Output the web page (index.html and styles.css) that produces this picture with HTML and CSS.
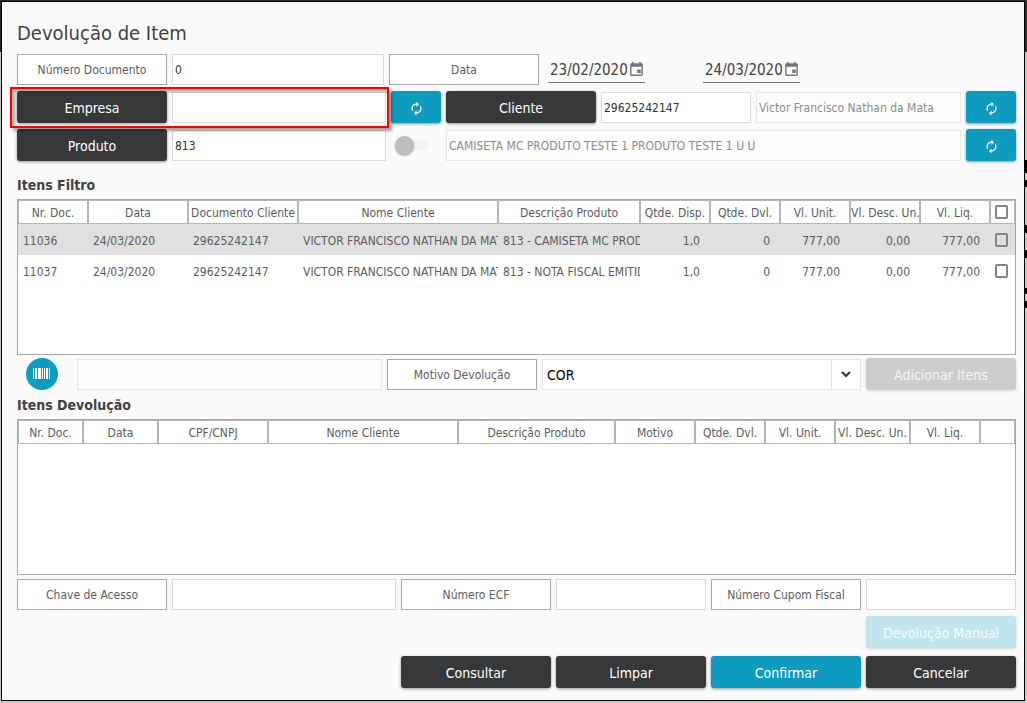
FILE: index.html
```html
<!DOCTYPE html>
<html lang="pt-BR">
<head>
<meta charset="utf-8">
<title>Devolução de Item</title>
<link rel="stylesheet" href="styles.css">
</head>
<body>
<svg class="symbols" aria-hidden="true">
  <symbol id="sync" viewBox="0 0 24 24"><path d="M12 6v3l4-4-4-4v3c-4.420 0-8 3.580-8 8 0 1.570.46 3.030 1.240 4.260L6.700 14.800C6.250 13.970 6 13.010 6 12c0-3.310 2.690-6 6-6zm6.760 1.740L17.300 9.200c.44.840.7 1.790.7 2.800 0 3.310-2.690 6-6 6v-3l-4 4 4 4v-3c4.420 0 8-3.580 8-8 0-1.570-.46-3.030-1.240-4.260z"/></symbol>
  <symbol id="calendar" viewBox="0 0 24 24"><path d="M18 12h-5v5h5v-5zM16 1v2H8V1H6v2H5c-1.110 0-2 .9-2 2v14c0 1.100.89 2 2 2h14c1.100 0 2-.9 2-2V5c0-1.100-.9-2-2-2h-1V1h-2zm3 18H5V8h14v11z"/></symbol>
</svg>
<main class="dialog">
  <h1 class="title">Devolução de Item</h1>
  <form class="form">
    <div class="filters">
      <div class="row row-document">
        <label class="caption" for="numero">Número Documento</label>
        <input class="field" id="numero" type="text" value="0">
        <label class="caption" for="data-inicio">Data</label>
        <span class="date">
          <input class="date-input" id="data-inicio" type="text" value="23/02/2020">
          <svg class="date-icon" aria-hidden="true"><use href="#calendar"/></svg>
        </span>
        <span class="date">
          <input class="date-input" type="text" value="24/03/2020" aria-label="Data final">
          <svg class="date-icon" aria-hidden="true"><use href="#calendar"/></svg>
        </span>
      </div>
      <div class="row row-lookup">
        <div class="company">
          <button class="btn" type="button">Empresa</button>
          <input class="field" type="text" aria-label="Empresa">
        </div>
        <button class="btn btn-primary" type="button" aria-label="Limpar empresa"><svg class="sync"><use href="#sync"/></svg></button>
        <button class="btn" type="button">Cliente</button>
        <input class="field" type="text" value="29625242147" aria-label="Documento do cliente">
        <input class="field" type="text" value="Victor Francisco Nathan da Mata" aria-label="Nome do cliente" disabled>
        <button class="btn btn-primary" type="button" aria-label="Limpar cliente"><svg class="sync"><use href="#sync"/></svg></button>
      </div>
      <div class="row row-lookup">
        <button class="btn" type="button">Produto</button>
        <input class="field" type="text" value="813" aria-label="Produto">
        <input class="switch" type="checkbox" role="switch" aria-label="Filtrar por grade">
        <input class="field field-wide" type="text" value="CAMISETA MC PRODUTO TESTE 1 PRODUTO TESTE 1 U U" aria-label="Descrição do produto" disabled>
        <button class="btn btn-primary" type="button" aria-label="Limpar produto"><svg class="sync"><use href="#sync"/></svg></button>
      </div>
    </div>

    <h2 class="section section-first">Itens Filtro</h2>
    <div class="grid">
      <table class="table">
        <colgroup>
          <col class="w70"><col class="w100"><col class="w110"><col class="w200"><col><col class="w70"><col class="w70"><col class="w70"><col class="w70"><col class="w70"><col class="w25">
        </colgroup>
        <thead>
          <tr><th>Nr. Doc.</th><th>Data</th><th>Documento Cliente</th><th>Nome Cliente</th><th>Descrição Produto</th><th>Qtde. Disp.</th><th>Qtde. Dvl.</th><th>Vl. Unit.</th><th>Vl. Desc. Un.</th><th>Vl. Liq.</th><th class="pick"><input class="check" type="checkbox" aria-label="Selecionar todos"></th></tr>
        </thead>
        <tbody>
          <tr class="selected"><td>11036</td><td>24/03/2020</td><td>29625242147</td><td>VICTOR FRANCISCO NATHAN DA MATA</td><td>813 - CAMISETA MC PRODUTO</td><td class="num">1,0</td><td class="num">0</td><td class="num">777,00</td><td class="num">0,00</td><td class="num">777,00</td><td class="pick"><input class="check" type="checkbox" aria-label="Selecionar 11036"></td></tr>
          <tr><td>11037</td><td>24/03/2020</td><td>29625242147</td><td>VICTOR FRANCISCO NATHAN DA MATA</td><td>813 - NOTA FISCAL EMITIDA</td><td class="num">1,0</td><td class="num">0</td><td class="num">777,00</td><td class="num">0,00</td><td class="num">777,00</td><td class="pick"><input class="check" type="checkbox" aria-label="Selecionar 11037"></td></tr>
        </tbody>
      </table>
    </div>

    <div class="row row-reason">
      <button class="barcode" type="button" aria-label="Ler código de barras">
        <svg class="barcode-icon" viewBox="0 0 18 12" aria-hidden="true"><path d="M0 0h1v11H0zM2 0h2v11H2zM5 0h3v11H5zM9 0h1v11H9zM11 0h1v11h-1zM13 0h2v11h-2zM16 0h1v11h-1z"/></svg>
      </button>
      <input class="field" type="text" aria-label="Código de barras" disabled>
      <label class="caption" for="motivo">Motivo Devolução</label>
      <span class="combo">
        <select class="select" id="motivo"><option>COR</option></select>
        <span class="combo-arrow"><svg class="chevron" viewBox="0 0 10 7" aria-hidden="true"><path d="M1 1l4 4 4-4"/></svg></span>
      </span>
      <button class="btn btn-muted" type="button" disabled>Adicionar Itens</button>
    </div>

    <h2 class="section">Itens Devolução</h2>
    <div class="grid">
      <table class="table">
        <colgroup>
          <col class="w65"><col class="w75"><col class="w110"><col class="w190"><col><col class="w80"><col class="w70"><col class="w70"><col class="w75"><col class="w70"><col class="w35">
        </colgroup>
        <thead>
          <tr><th>Nr. Doc.</th><th>Data</th><th>CPF/CNPJ</th><th>Nome Cliente</th><th>Descrição Produto</th><th>Motivo</th><th>Qtde. Dvl.</th><th>Vl. Unit.</th><th>Vl. Desc. Un.</th><th>Vl. Liq.</th><th></th></tr>
        </thead>
      </table>
    </div>

    <div class="row row-keys">
      <label class="caption" for="chave">Chave de Acesso</label>
      <input class="field" id="chave" type="text">
      <label class="caption" for="ecf">Número ECF</label>
      <input class="field" id="ecf" type="text">
      <label class="caption" for="cupom">Número Cupom Fiscal</label>
      <input class="field" id="cupom" type="text">
    </div>

    <div class="actions">
      <button class="btn btn-pale" type="button" disabled>Devolução Manual</button>
    </div>
    <div class="actions actions-main">
      <button class="btn" type="button">Consultar</button>
      <button class="btn" type="button">Limpar</button>
      <button class="btn btn-primary" type="button">Confirmar</button>
      <button class="btn" type="button">Cancelar</button>
    </div>
  </form>
</main>
</body>
</html>
```
FILE: styles.css
```css
* { box-sizing: border-box; }

body {
  margin: 0;
  padding: 1px 2px 2px 1px;
  background:
    linear-gradient(transparent 160px, #000 160px 173px, transparent 173px 180px, #000 180px 187px, transparent 187px 225px, #000 225px 233px, transparent 233px 250px, #000 250px 258px, transparent 258px 288px, #000 288px 294px, transparent 294px 301px, #000 301px 308px, transparent 308px) right / 2px 100% no-repeat,
    linear-gradient(#2b2b2b 52px, #c8c8c8 52px);
  font-family: Tahoma, "DejaVu Sans Condensed", "Noto Sans", sans-serif;
  font-size: 12px;
  color: #5c5c5c;
}

button, input, select { font: inherit; margin: 0; }

.symbols { display: none; }

.dialog {
  min-height: 700px;
  padding: 16px 8px 12px 15px;
  border: 1px solid #000;
  background: #fafafa;
}

.title {
  margin: 0 0 5px;
  font-size: 20px;
  line-height: 30px;
  font-weight: 400;
  color: #424242;
}

.filters { display: grid; gap: 6px; }

.row { display: grid; gap: 5px; align-items: end; }
.row-document { grid-template-columns: 150px 212fr 150px 150px 317fr; min-height: 32px; }
.row-lookup { grid-template-columns: 150px 214fr 50px 150px 150px 205fr 50px; }
.row-reason { grid-template-columns: 55px 305fr 150px 319fr 150px; margin-top: 3px; }
.row-keys { grid-template-columns: 150px 224fr 150px 150px 150px 150px; margin-top: 4px; }

.caption {
  height: 31px;
  border: 1px solid #a6a6a6;
  background: #fff;
  line-height: 31px;
  text-align: center;
  white-space: nowrap;
}

.field {
  width: 100%;
  min-width: 0;
  height: 31px;
  padding: 0 2px;
  border: 1px solid #d9d9d9;
  border-radius: 0;
  background: #fff;
  color: #333;
}
.field:disabled { border-color: #e6e6e6; background: #fdfdfd; color: #8c8c8c; }
.field-wide { grid-column: span 3; }

.date {
  display: flex;
  align-items: center;
  width: 97px;
  height: 26px;
  margin: 0 0 2px 4px;
  border-bottom: 1px solid #757575;
}
.date-input {
  flex: 1;
  min-width: 0;
  padding: 0 0 0 2px;
  border: 0;
  background: none;
  font-size: 15px;
  color: #424242;
}
.date-icon { flex: none; width: 17px; height: 17px; fill: #757575; }

.btn {
  height: 32px;
  padding: 2px 0 0;
  border: 0;
  border-radius: 3px;
  background: #37383a;
  box-shadow: 0 1px 3px rgba(0, 0, 0, .4);
  color: #fff;
  font-size: 14px;
  line-height: 30px;
  white-space: nowrap;
}
.btn-primary { background: #0e9bc0; }
.btn-muted { background: #cdcdcd; color: #f5f5f5; box-shadow: 0 1px 3px rgba(0, 0, 0, .15); }
.btn-pale { background: #c2e4ed; color: #f8fcfd; box-shadow: 0 1px 3px rgba(0, 0, 0, .15); }

.sync { display: block; width: 15px; height: 15px; margin: 0 auto; fill: #fff; }

.company {
  position: relative;
  grid-column: span 2;
  display: grid;
  grid-template-columns: 150px 1fr;
  gap: 5px;
  align-items: end;
}
.company::after {
  content: "";
  position: absolute;
  inset: -4px -3px -5px -7px;
  border: 2px solid #f00;
  box-shadow: 3px 3px 3px rgba(0, 0, 0, .35), inset 3px 3px 3px rgba(0, 0, 0, .3);
  pointer-events: none;
}

.switch {
  display: grid;
  align-items: center;
  align-self: center;
  appearance: none;
  width: 32px;
  height: 11px;
  margin-left: 5px;
  border-radius: 6px;
  background: #f3f3f3;
}
.switch::before {
  content: "";
  width: 19px;
  height: 19px;
  margin: -4px 0 -4px -1px;
  border-radius: 50%;
  background: #bdbdbd;
  box-shadow: 0 1px 2px rgba(0, 0, 0, .3);
}

.section {
  margin: 0;
  padding: 5px 0 4px;
  font-size: 14px;
  line-height: 20px;
  font-weight: 700;
  color: #424242;
}
.section-first { padding-top: 14px; }

.grid { min-height: 156px; border: 1px solid #a6a6a6; background: #fff; }

.table { width: 100%; table-layout: fixed; border-collapse: separate; border-spacing: 0; }
.table th {
  height: 24px;
  padding: 2px 0 0;
  border: 1px solid #b5b5b5;
  font-weight: 400;
  white-space: nowrap;
  overflow: hidden;
}
.table td { height: 31px; padding: 2px 0 0 5px; white-space: nowrap; overflow: hidden; }
.table .num { padding: 2px 10px 0 0; text-align: right; }
.table .pick { padding: 0 2px 0 0; }
.selected { background: #e0e0e0; }

.w25 { width: 25px; }
.w35 { width: 35px; }
.w65 { width: 65px; }
.w70 { width: 70px; }
.w75 { width: 75px; }
.w80 { width: 80px; }
.w100 { width: 100px; }
.w110 { width: 110px; }
.w190 { width: 190px; }
.w200 { width: 200px; }

.check {
  display: block;
  appearance: none;
  width: 13px;
  height: 14px;
  margin: 0 auto;
  border: 2px solid #858585;
  border-radius: 2px;
}

.barcode {
  display: grid;
  place-items: center;
  width: 32px;
  height: 32px;
  margin-left: 9px;
  padding: 0;
  border: 0;
  border-radius: 50%;
  background: #0e9bc0;
}
.barcode-icon { width: 18px; height: 12px; fill: #fff; }

.combo { position: relative; display: block; height: 31px; }
.select {
  width: 100%;
  height: 31px;
  padding: 0 34px 0 4px;
  border: 1px solid #e6e6e6;
  border-radius: 0;
  appearance: none;
  background: #fff;
  color: #000;
  font-size: 14px;
}
.combo-arrow {
  position: absolute;
  inset: 1px 1px 1px auto;
  display: grid;
  place-items: center;
  width: 29px;
  border-left: 1px solid #e6e6e6;
  pointer-events: none;
}
.chevron { width: 10px; height: 7px; fill: none; stroke: #333; stroke-width: 2; }

.actions { display: flex; justify-content: flex-end; gap: 5px; margin-top: 6px; }
.actions-main { margin-top: 8px; }
.actions .btn { width: 150px; }
```
